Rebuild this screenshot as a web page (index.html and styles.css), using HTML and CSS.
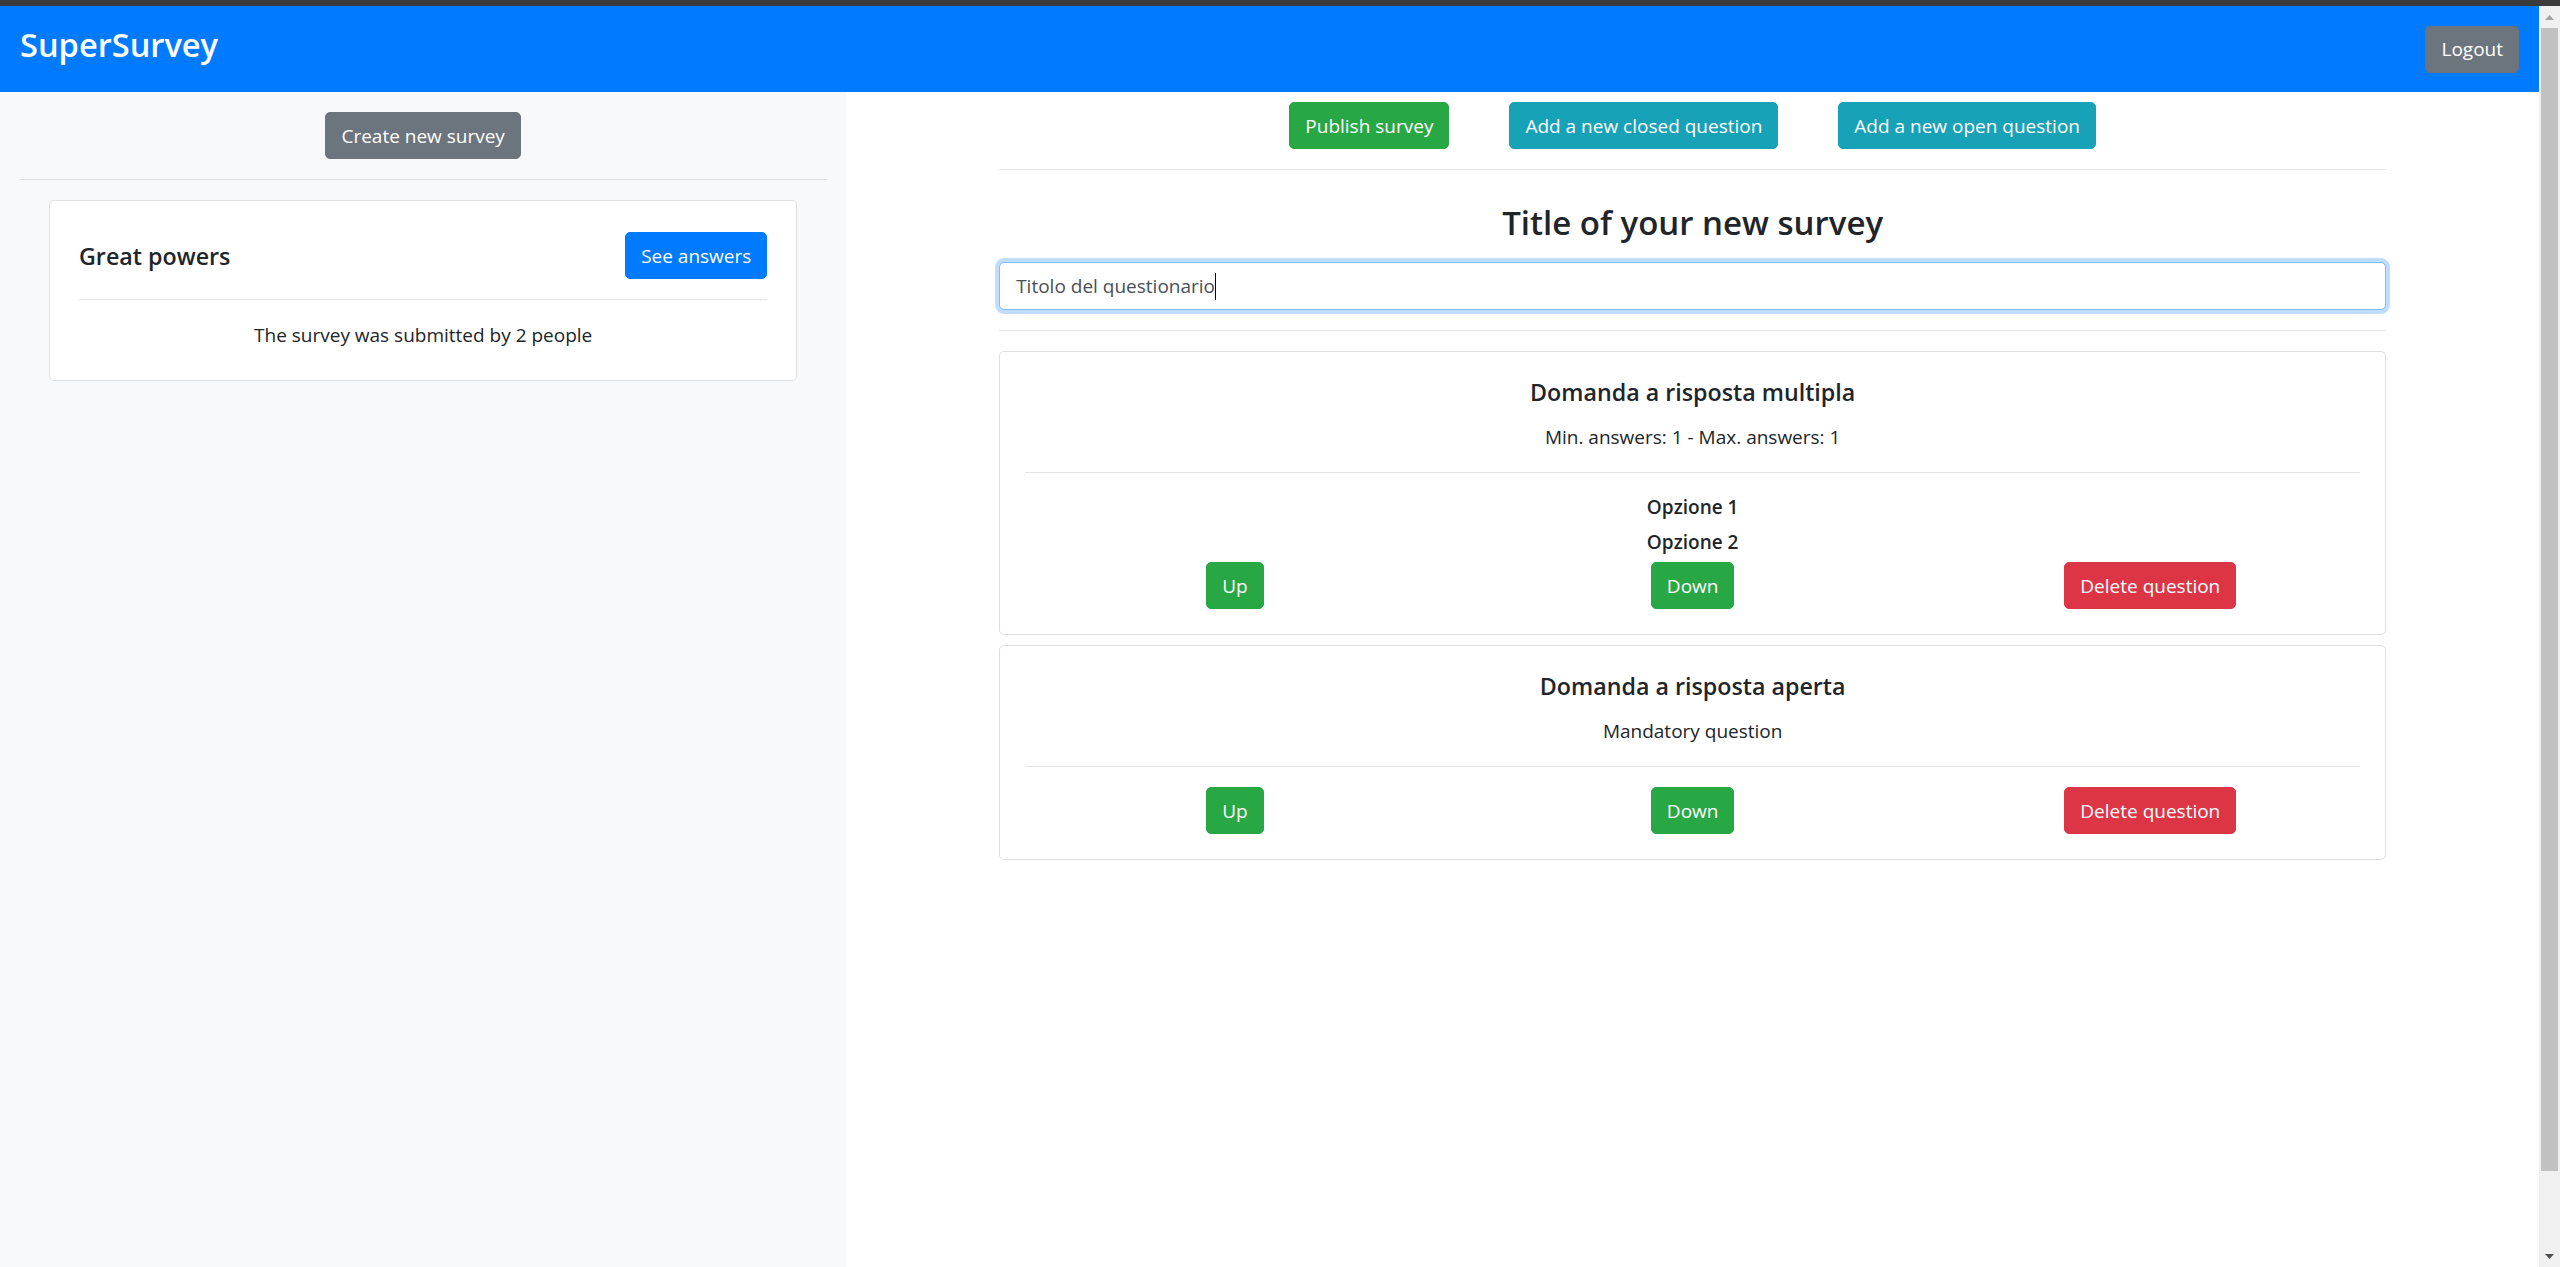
FILE: index.html
```html
<!DOCTYPE html>
<html lang="it">
<head>
<meta charset="utf-8">
<title>SuperSurvey</title>
<link rel="stylesheet" href="styles.css">
</head>
<body>
<div class="topstrip"></div>
<div class="window">
  <div class="app">
    <nav class="navbar">
      <span class="brand">SuperSurvey</span>
      <button class="btn btn-secondary">Logout</button>
    </nav>
    <div class="layout">
      <aside class="sidebar">
        <div class="sidebar-top">
          <button class="btn btn-secondary">Create new survey</button>
        </div>
        <hr class="rule">
        <div class="survey-card">
          <div class="survey-head">
            <h5 class="survey-name">Great powers</h5>
            <button class="btn btn-primary">See answers</button>
          </div>
          <hr class="rule">
          <p class="survey-count">The survey was submitted by 2 people</p>
        </div>
      </aside>
      <main class="main">
        <div class="container">
          <div class="actions">
            <button class="btn btn-success">Publish survey</button>
            <button class="btn btn-info">Add a new closed question</button>
            <button class="btn btn-info">Add a new open question</button>
          </div>
          <hr class="rule">
          <h3 class="page-title">Title of your new survey</h3>
          <div class="title-input">Titolo del questionario<span class="caret"></span></div>
          <hr class="rule">

          <div class="qcard">
            <h5 class="qtitle">Domanda a risposta multipla</h5>
            <p class="qmeta">Min. answers: 1 - Max. answers: 1</p>
            <hr class="rule">
            <div class="options">
              <div class="option">Opzione 1</div>
              <div class="option">Opzione 2</div>
            </div>
            <div class="qactions">
              <div class="qcol"><button class="btn btn-success">Up</button></div>
              <div class="qcol"><button class="btn btn-success">Down</button></div>
              <div class="qcol"><button class="btn btn-danger">Delete question</button></div>
            </div>
          </div>

          <div class="qcard">
            <h5 class="qtitle">Domanda a risposta aperta</h5>
            <p class="qmeta">Mandatory question</p>
            <hr class="rule">
            <div class="qactions">
              <div class="qcol"><button class="btn btn-success">Up</button></div>
              <div class="qcol"><button class="btn btn-success">Down</button></div>
              <div class="qcol"><button class="btn btn-danger">Delete question</button></div>
            </div>
          </div>
        </div>
      </main>
    </div>
  </div>
  <div class="scrollbar">
    <div class="sb-arrow sb-up">
      <svg width="9" height="5" viewBox="0 0 9 5"><polygon points="0,5 4.5,0 9,5" fill="#a3a3a3"/></svg>
    </div>
    <div class="sb-thumb"></div>
    <div class="sb-track"></div>
    <div class="sb-arrow sb-down">
      <svg width="9" height="5" viewBox="0 0 9 5"><polygon points="0,0 9,0 4.5,5" fill="#505050"/></svg>
    </div>
  </div>
</div>
</body>
</html>
```
FILE: styles.css
```css
* { box-sizing: border-box; }

html, body {
  margin: 0;
  height: 100%;
  overflow: hidden;
}

body {
  font-family: "Open Sans", "Noto Sans", sans-serif;
  font-size: 19px;
  line-height: 30px;
  color: #212529;
  background: #fff;
  display: flex;
  flex-direction: column;
}

.topstrip {
  flex: none;
  height: 6px;
  background: #3b3b3b;
}

.window {
  flex: 1;
  display: flex;
  min-height: 0;
}

.app {
  flex: 1;
  display: flex;
  flex-direction: column;
  min-width: 0;
}

/* navbar */
.navbar {
  flex: none;
  height: 86px;
  background: #007bff;
  display: flex;
  align-items: center;
  justify-content: space-between;
  padding: 0 20px;
}

.brand {
  color: #fff;
  font-size: 32.6px;
  font-weight: 600;
  line-height: 40px;
  margin-bottom: 9px;
}

/* buttons */
.btn {
  font-family: inherit;
  font-size: 19px;
  line-height: 30px;
  padding: 7.5px 15px;
  border: 1px solid transparent;
  border-radius: 5px;
  color: #fff;
  cursor: pointer;
  white-space: nowrap;
}
.btn-secondary { background: #6c757d; border-color: #6c757d; }
.btn-primary { background: #007bff; border-color: #007bff; }
.btn-success { background: #28a745; border-color: #28a745; }
.btn-info { background: #17a2b8; border-color: #17a2b8; }
.btn-danger { background: #dc3545; border-color: #dc3545; }

.rule {
  border: 0;
  border-top: 1px solid rgba(0, 0, 0, 0.1);
  height: 0;
  margin: 20px 0;
}

/* layout */
.layout {
  flex: 1;
  display: flex;
  min-height: 0;
}

.sidebar {
  flex: 0 0 33.3333%;
  background: #f8f9fa;
  padding: 20px 19px 0;
}

.sidebar-top {
  display: flex;
  justify-content: center;
}

.survey-card {
  margin: 0 30px;
  background: #fff;
  border: 1px solid rgba(0, 0, 0, 0.125);
  border-radius: 5px;
  padding: 31px 29px 30px;
}

.survey-head {
  display: flex;
  align-items: center;
  justify-content: space-between;
}

.survey-name {
  margin: 0;
  font-size: 23.25px;
  font-weight: 600;
  line-height: 30px;
}

.survey-count {
  margin: 0;
  text-align: center;
}

/* main */
.main {
  flex: 1;
  min-width: 0;
  padding: 10px 19px 0;
}

.container {
  max-width: 1425px;
  margin: 0 auto;
  padding: 0 19px;
}

.actions {
  display: flex;
  justify-content: center;
  gap: 60px;
}

.page-title {
  margin: 33px 0 19px;
  font-size: 33px;
  font-weight: 600;
  line-height: 40px;
  text-align: center;
}

.title-input {
  height: 48px;
  line-height: 46px;
  padding: 0 16px;
  border: 1px solid #80bdff;
  border-radius: 5px;
  box-shadow: 0 0 0 4px rgba(0, 123, 255, 0.25);
  color: #495057;
  background: #fff;
}

.caret {
  display: inline-block;
  width: 1px;
  height: 27px;
  background: #000;
  vertical-align: middle;
  margin-top: -3px;
}

.qcard {
  border: 1px solid rgba(0, 0, 0, 0.125);
  border-radius: 5px;
  padding: 25px;
  margin-bottom: 10px;
  text-align: center;
}

.qtitle {
  margin: 0 0 15px;
  font-size: 23.25px;
  font-weight: 600;
  line-height: 30px;
}

.qmeta {
  margin: 0;
}

.options {
  display: flex;
  flex-direction: column;
  gap: 5px;
  margin: -1px 0 5px;
  font-weight: 600;
}

.qactions {
  display: grid;
  grid-template-columns: repeat(3, 1fr);
  margin: 0 -19px;
}

.qcol {
  display: flex;
  justify-content: center;
  padding: 0 19px;
}

/* scrollbar */
.scrollbar {
  flex: 0 0 21px;
  background: #f0f0f0;
  display: flex;
  flex-direction: column;
  align-items: center;
}

.sb-arrow {
  flex: none;
  width: 21px;
  display: flex;
  align-items: center;
  justify-content: center;
}
.sb-up { height: 22px; }
.sb-down { height: 21px; }

.sb-thumb {
  flex: none;
  width: 17px;
  height: 1143px;
  background: #c1c1c1;
}

.sb-track { flex: 1; }
```
